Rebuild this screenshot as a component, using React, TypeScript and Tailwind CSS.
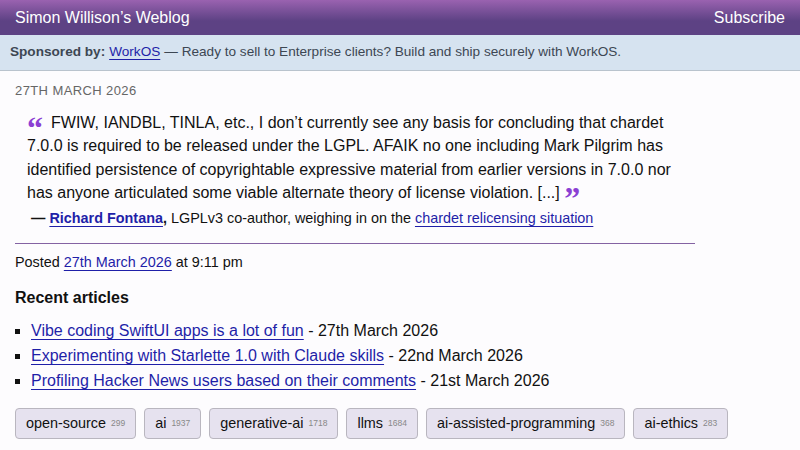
import React from 'react'

const tags = [
  { name: 'open-source', count: 299 },
  { name: 'ai', count: 1937 },
  { name: 'generative-ai', count: 1718 },
  { name: 'llms', count: 1684 },
  { name: 'ai-assisted-programming', count: 368 },
  { name: 'ai-ethics', count: 283 },
]

const articles = [
  { title: 'Vibe coding SwiftUI apps is a lot of fun', date: '27th March 2026' },
  { title: 'Experimenting with Starlette 1.0 with Claude skills', date: '22nd March 2026' },
  { title: 'Profiling Hacker News users based on their comments', date: '21st March 2026' },
]

const link = 'text-[#1f1fa8] underline decoration-[#1f1fa8] underline-offset-[3px]'
const mark = "text-[#8b3fd3] font-['Liberation_Serif',serif] font-bold text-[32px] leading-[0] align-[-11px]"

export default function App() {
  return (
    <div className="min-h-[450px] bg-[#fdfcfe] text-[#111] font-['Liberation_Sans',Arial,sans-serif]">
      <header className="h-[35px] flex items-center justify-between px-[15px] bg-gradient-to-b from-[#9a62b0] to-[#5d4284] to-60% text-white text-[16px]">
        <span>Simon Willison’s Weblog</span>
        <span>Subscribe</span>
      </header>

      <div className="h-[36px] flex items-center px-[10px] bg-[#d6e3f0] border-b border-[#b9c3cd] text-[13.6px] text-[#3d4753]">
        <span className="font-bold mr-1">Sponsored by:</span>
        <span className="text-[#1f1fa8] underline underline-offset-[3px] mr-1">WorkOS</span>
        <span>— Ready to sell to Enterprise clients? Build and ship securely with WorkOS.</span>
      </div>

      <main className="px-[15px] w-[710px]">
        <div className="pt-[10px] text-[13px] leading-[20px] uppercase tracking-[0.4px] text-[#666]">27th March 2026</div>

        <blockquote className="ml-[12px] mt-[10px] w-[672px] text-[16px] leading-[23.3px]">
          <span className={`${mark} mr-[8px]`}>“</span>FWIW, IANDBL, TINLA, etc., I don’t currently see any basis for concluding that chardet 7.0.0 is required to be released under the LGPL. AFAIK no one including Mark Pilgrim has identified persistence of copyrightable expressive material from earlier versions in 7.0.0 nor has anyone articulated some viable alternate theory of license violation. [...]{' '}
          <span className={mark}>”</span>
        </blockquote>

        <p className="ml-[16px] mt-[4px] text-[14.4px] leading-[20px]">
          <span className="font-bold">— </span>
          <span className={`font-bold ${link}`}>Richard Fontana</span>
          <span className="font-bold">,</span> LGPLv3 co-author, weighing in on the{' '}
          <span className={link}>chardet relicensing situation</span>
        </p>

        <hr className="mt-[15px] border-0 border-t border-[#8462a3]" />

        <p className="mt-[8px] text-[14.4px] leading-[20px]">
          Posted <span className={link}>27th March 2026</span> at 9:11 pm
        </p>

        <h3 className="mt-[16px] text-[16px] leading-[20px] font-bold">Recent articles</h3>

        <ul className="mt-[10px] pl-[16px] list-[square] text-[16px] leading-[25px]">
          {articles.map(a => (
            <li key={a.title}>
              <span className={link}>{a.title}</span> - {a.date}
            </li>
          ))}
        </ul>
      </main>

      <div className="mt-[15px] px-[15px] flex gap-[8px]">
        {tags.map(t => (
          <span
            key={t.name}
            className="h-[31px] flex items-center px-[10px] bg-[#e6e2ef] border border-[#b9b6bf] rounded-[4px] text-[14.4px] text-[#111]"
          >
            {t.name}
            <span className="ml-[5px] text-[8.5px] text-[#888]">{t.count}</span>
          </span>
        ))}
      </div>
    </div>
  )
}
